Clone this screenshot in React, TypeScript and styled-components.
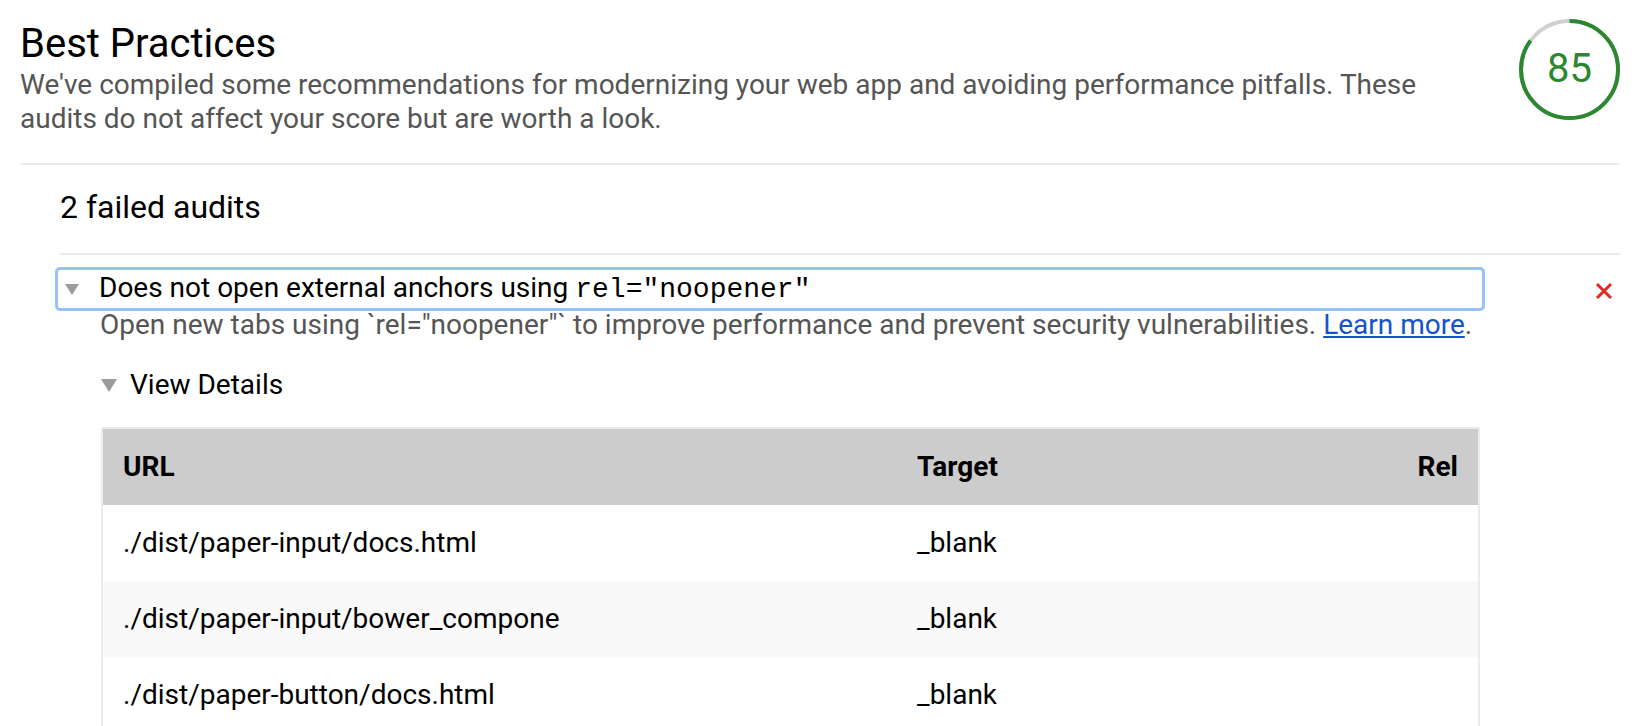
import React from "react";
import styled, { createGlobalStyle } from "styled-components";

const GlobalStyle = createGlobalStyle`
  html, body {
    margin: 0;
    padding: 0;
    background: #ffffff;
  }
  body {
    font-family: Roboto, "Noto Sans", "Liberation Sans", sans-serif;
    color: #000000;
    -webkit-font-smoothing: antialiased;
  }
`;

const Page = styled.div`
  padding: 0 25px 0 20px;
`;

const Header = styled.header`
  display: flex;
  align-items: flex-start;
  gap: 30px;
  padding: 19px 0 27px;
  border-bottom: 2px solid #ebebeb;
`;

const TitleBlock = styled.div`
  flex: 1;
  min-width: 0;
`;

const Title = styled.h1`
  margin: 0;
  font-size: 40px;
  font-weight: 400;
  line-height: 49px;
  color: #000;
`;

const Description = styled.p`
  margin: 0;
  font-size: 28px;
  line-height: 34px;
  color: #555555;
`;

const Gauge = styled.div`
  position: relative;
  flex: none;
  width: 101px;
  height: 101px;
`;

const GaugeSvg = styled.svg`
  position: absolute;
  inset: 0;
`;

const GaugeValue = styled.span`
  position: absolute;
  inset: 0;
  display: flex;
  align-items: center;
  justify-content: center;
  padding-bottom: 2px;
  font-size: 40px;
  line-height: 1;
  color: #2b882f;
`;

const Group = styled.section`
  margin-left: 40px;
`;

const GroupHeader = styled.h2`
  margin: 0;
  padding: 23px 0 27px;
  font-size: 32px;
  font-weight: 400;
  line-height: 38px;
  border-bottom: 2px solid #ebebeb;
`;

const Audit = styled.div`
  display: flex;
  align-items: flex-start;
  margin-left: -2px;
  padding-top: 15px;
`;

const AuditBody = styled.div`
  flex: none;
  width: 1424px;
`;

const Summary = styled.div`
  display: flex;
  align-items: center;
  height: 38px;
  padding-left: 7px;
  outline: 3px solid #97c1f7;
  border-radius: 2px;
  font-size: 28px;
  line-height: 38px;
`;

const Marker = styled.span<{ $w: number; $h: number }>`
  flex: none;
  width: 0;
  height: 0;
  border-left: ${(p) => p.$w / 2}px solid transparent;
  border-right: ${(p) => p.$w / 2}px solid transparent;
  border-top: ${(p) => p.$h}px solid #9b9b9b;
`;

const SummaryText = styled.span`
  margin-left: 20px;
  white-space: nowrap;
`;

const Code = styled.code`
  font-family: "Courier New", "Liberation Mono", monospace;
  font-size: 28px;
`;

const AuditDescription = styled.p`
  margin: 0;
  padding-left: 42px;
  font-size: 28px;
  line-height: 34px;
  color: #555555;
  white-space: nowrap;
`;

const Link = styled.a`
  color: #1553c8;
  text-decoration: underline;
`;

const Details = styled.div`
  padding-left: 43px;
  margin-top: 24px;
`;

const DetailsSummary = styled.div`
  display: flex;
  align-items: center;
  height: 38px;
  font-size: 28px;
  line-height: 38px;
`;

const DetailsLabel = styled.span`
  margin-left: 13px;
`;

const Table = styled.table`
  margin-top: 23px;
  width: 1379px;
  table-layout: fixed;
  border-spacing: 0;
  border: 2px solid #ebebeb;
  font-size: 28px;
  line-height: 38px;
`;

const HeadCell = styled.th<{ $align?: string }>`
  height: 76px;
  padding: 0 20px;
  background: #cccccc;
  font-weight: 700;
  text-align: ${(p) => p.$align || "left"};
  vertical-align: middle;
`;

const Row = styled.tr`
  &:nth-child(even) {
    background: #f9f9f9;
  }
`;

const Cell = styled.td<{ $align?: string }>`
  height: 76px;
  padding: 0 20px;
  text-align: ${(p) => p.$align || "left"};
  vertical-align: middle;
  white-space: nowrap;
  overflow: hidden;
`;

const FailIcon = styled.svg`
  flex: none;
  margin-left: auto;
  margin-right: 7px;
  margin-top: 12px;
`;

const rows = [
  { url: "./dist/paper-input/docs.html", target: "_blank", rel: "" },
  { url: "./dist/paper-input/bower_compone", target: "_blank", rel: "" },
  { url: "./dist/paper-button/docs.html", target: "_blank", rel: "" },
];

export default function App() {
  const r = 48.5;
  const c = 2 * Math.PI * r;
  return (
    <>
      <GlobalStyle />
      <Page>
        <Header>
          <TitleBlock>
            <Title>Best Practices</Title>
            <Description>
              We've compiled some recommendations for modernizing your web app and avoiding
              performance pitfalls. These audits do not affect your score but are worth a look.
            </Description>
          </TitleBlock>
          <Gauge>
            <GaugeSvg width="101" height="101" viewBox="0 0 101 101">
              <circle cx="50.5" cy="50.5" r={r} fill="none" stroke="#d0d0d0" strokeWidth="4" />
              <circle
                cx="50.5"
                cy="50.5"
                r={r}
                fill="none"
                stroke="#2b882f"
                strokeWidth="4"
                strokeDasharray={`${0.85 * c} ${c}`}
                transform="rotate(-90 50.5 50.5)"
              />
            </GaugeSvg>
            <GaugeValue>85</GaugeValue>
          </Gauge>
        </Header>
        <Group>
          <GroupHeader>2 failed audits</GroupHeader>
          <Audit>
            <AuditBody>
              <Summary>
                <Marker $w={15} $h={11} />
                <SummaryText>
                  Does not open external anchors using <Code>rel="noopener"</Code>
                </SummaryText>
              </Summary>
              <AuditDescription>
                Open new tabs using `rel="noopener"` to improve performance and prevent security
                vulnerabilities. <Link href="#">Learn more</Link>.
              </AuditDescription>
              <Details>
                <DetailsSummary>
                  <Marker $w={16} $h={13} />
                  <DetailsLabel>View Details</DetailsLabel>
                </DetailsSummary>
                <Table>
                  <colgroup>
                    <col style={{ width: 794 }} />
                    <col />
                    <col style={{ width: 120 }} />
                  </colgroup>
                  <thead>
                    <tr>
                      <HeadCell>URL</HeadCell>
                      <HeadCell>Target</HeadCell>
                      <HeadCell $align="right">Rel</HeadCell>
                    </tr>
                  </thead>
                  <tbody>
                    {rows.map((row) => (
                      <Row key={row.url}>
                        <Cell>{row.url}</Cell>
                        <Cell>{row.target}</Cell>
                        <Cell $align="right">{row.rel}</Cell>
                      </Row>
                    ))}
                  </tbody>
                </Table>
              </Details>
            </AuditBody>
            <FailIcon width="18" height="18" viewBox="0 0 18 18">
              <path d="M2 2 L16 16 M16 2 L2 16" stroke="#e5281f" strokeWidth="3" fill="none" />
            </FailIcon>
          </Audit>
        </Group>
      </Page>
    </>
  );
}
